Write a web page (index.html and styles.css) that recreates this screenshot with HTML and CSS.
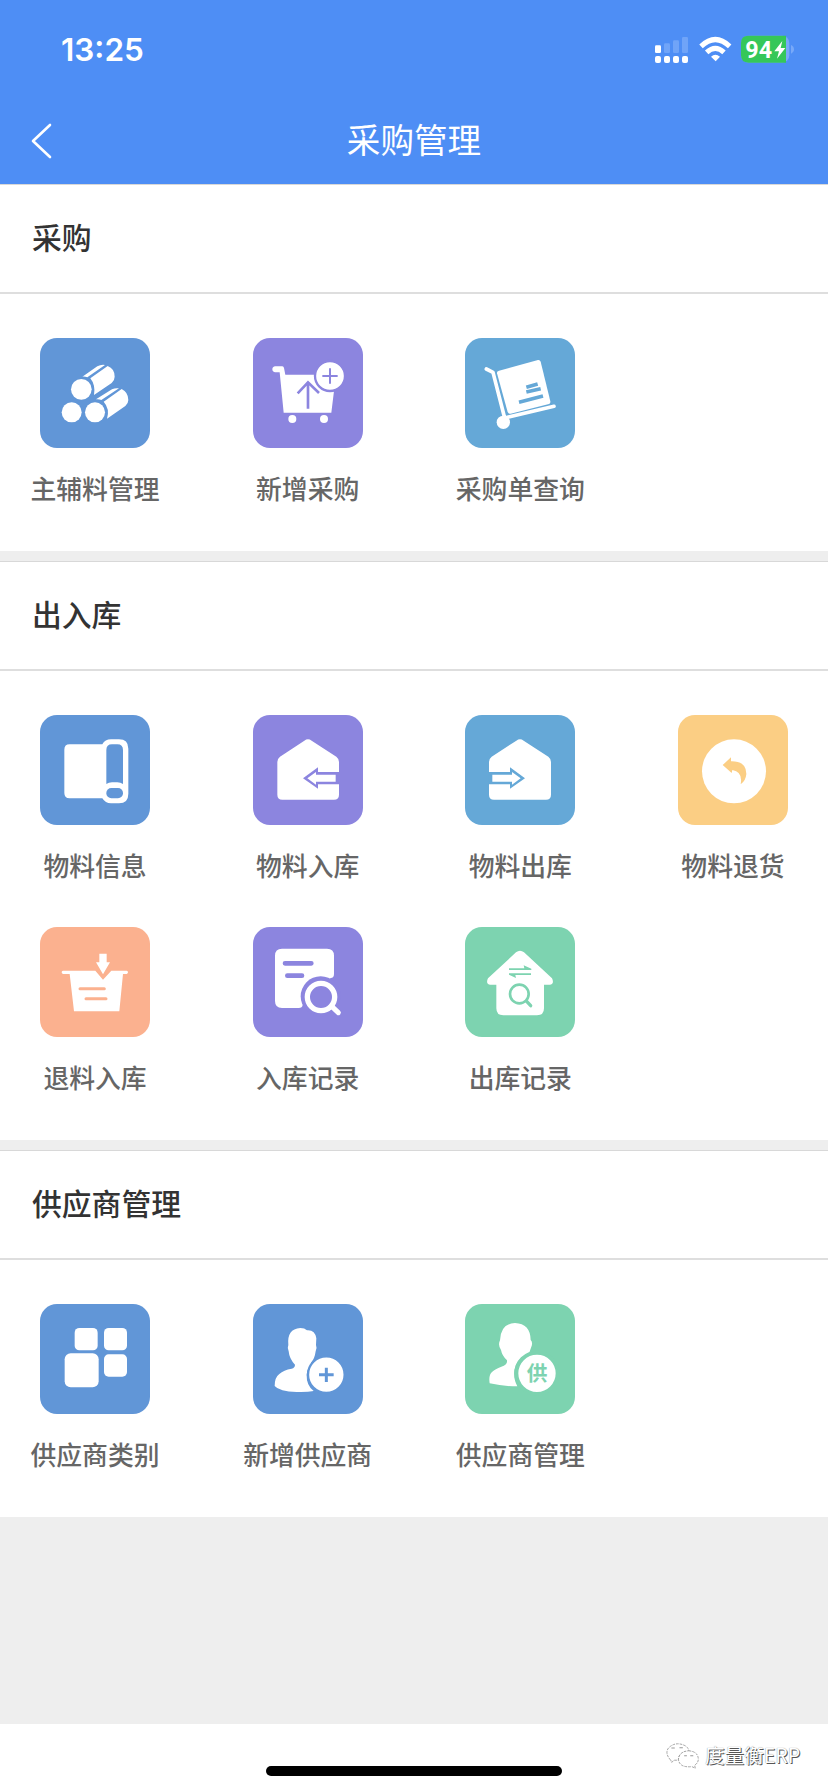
FILE: index.html
```
<!DOCTYPE html>
<html lang="zh-CN">
<head>
<meta charset="utf-8">
<title>采购管理</title>
<link rel="stylesheet" href="styles.css">
</head>
<body>
<div class="screen">
  <header class="header">
    <div class="status">
      <span class="time">13:25</span>
      <svg class="indicators" viewBox="0 0 564 180">
        <g fill="#fff">
          <rect x="45" y="76" width="18" height="23" rx="4"/>
          <rect x="45" y="108" width="18" height="21" rx="6"/>
          <rect x="72" y="108" width="18" height="21" rx="6"/>
          <rect x="99" y="108" width="18" height="21" rx="6"/>
          <rect x="126" y="108" width="18" height="21" rx="6"/>
        </g>
        <g fill="#70a4f8">
          <rect x="72" y="70" width="18" height="29" rx="4"/>
          <rect x="99" y="61" width="18" height="38" rx="4"/>
          <rect x="126" y="51" width="18" height="48" rx="4"/>
        </g>
        <g fill="none" stroke="#fff" stroke-width="15">
          <path d="M183 79Q226 38 269 79"/>
          <path d="M200 97Q226 73 252 97"/>
        </g>
        <path fill="#fff" d="M213 110Q226 98 240 110L227 124Z"/>
        <rect x="303" y="47" width="145" height="81" rx="22" fill="#78a9f9"/>
        <path fill="#35c759" d="M325 47H438V128H325Q303 128 303 106V69Q303 47 325 47Z"/>
        <path fill="#78a9f9" d="M453 75Q462 79 462 88T453 101Z"/>
        <text class="battery" x="316" y="113">94</text>
        <path fill="#fff" d="M427 63L403 94H417L411 116L436 84H422Z"/>
      </svg>
    </div>
    <div class="nav">
      <svg class="back" viewBox="0 0 22 36"><path d="M20 2L3 18L20 34"/></svg>
      <h1 class="nav-title">采购管理</h1>
    </div>
  </header>

  <main class="main">
    <section class="section">
      <h2 class="section-title">采购</h2>
      <div class="grid">
        <div class="item">
          <svg class="tile blue" viewBox="60 54 330 330">
            <g fill="#fff">
              <circle cx="155" cy="277" r="30"/><circle cx="225" cy="277" r="30"/><circle cx="184" cy="208" r="31"/>
              <path d="M187 170L232 139Q243 133 255 135L202 172Q194 169 187 170Z"/>
              <path d="M211 175L263 138Q284 146 284 170Q284 181 275 189L222 225Q227 195 211 175Z"/>
              <path d="M228 238L276 208Q286 203 297 205L244 240Q237 237 228 238Z"/>
              <path d="M251 245L305 207Q325 217 325 240Q325 250 316 258L261 296Q270 266 251 245Z"/>
            </g>
          </svg>
          <span class="label">主辅料管理</span>
        </div>
        <div class="item">
          <svg class="tile purple" viewBox="699 54 330 330">
            <path fill="#fff" d="M766 139H787Q791 139 792 144L796 164H884Q882 190 903 205Q920 217 942 213L934 278H791L779 157H766Q757 156 757 148T766 139Z"/>
            <circle class="disc" cx="930" cy="168" r="45" stroke-width="7"/>
            <circle cx="817" cy="297" r="12" fill="#fff"/><circle cx="912" cy="297" r="12" fill="#fff"/>
            <path class="cut" stroke-width="6" d="M930 145V191M907 168H953"/>
            <path class="cut" stroke-width="8" d="M864 266V188M833 220L864 187L897 219"/>
          </svg>
          <span class="label">新增采购</span>
        </div>
        <div class="item">
          <svg class="tile sky" viewBox="75 54 330 330">
            <path fill="#fff" d="M177 152L294 120Q300 119 302 125L331 244Q332 250 327 252L212 281Q205 282 203 276L171 160Q170 154 177 152Z"/>
            <path fill="none" stroke="#fff" stroke-width="11" stroke-linecap="round" stroke-linejoin="round" d="M139 147L159 157L194 294L342 259"/>
            <circle cx="190" cy="307" r="20" fill="#fff"/>
            <path class="cut" stroke-width="11" d="M259 202L293 192M259 216L302 206M237 247L309 228"/>
          </svg>
          <span class="label">采购单查询</span>
        </div>
      </div>
    </section>

    <section class="section">
      <h2 class="section-title">出入库</h2>
      <div class="grid">
        <div class="item">
          <svg class="tile blue" viewBox="60 44 330 330">
            <path fill="#fff" d="M149 132H247Q255 117 273 117H297Q325 117 325 145V280Q325 309 297 309H273Q256 309 247 294H149Q133 294 133 278V148Q133 132 149 132Z"/>
            <path class="hole" d="M276 132H292Q309 132 309 149V251Q302 246 292 246H276Q266 246 259 251V149Q259 132 276 132Z"/>
            <rect class="hole" x="259" y="263" width="50" height="31" rx="15"/>
          </svg>
          <span class="label">物料信息</span>
        </div>
        <div class="item">
          <svg class="tile purple" viewBox="699 44 330 330">
            <path fill="#fff" d="M853 121Q864 113 875 121L949 169Q957 175 957 185V283Q957 298 942 298H787Q772 298 772 283V185Q772 175 780 169Z"/>
            <path class="hole" d="M849 234L894 201V215H958V252H894V265Z"/>
            <path fill="#fff" d="M862 234L888 215V223H947V244H888V253Z"/>
          </svg>
          <span class="label">物料入库</span>
        </div>
        <div class="item">
          <svg class="tile sky" viewBox="75 44 330 330">
            <path fill="#fff" d="M229 121Q240 113 251 121L325 169Q333 175 333 185V283Q333 298 318 298H162Q147 298 147 283V185Q147 175 155 169Z"/>
            <path class="hole" d="M255 234L210 201V215H146V252H210V265Z"/>
            <path fill="#fff" d="M242 234L216 215V223H157V244H216V253Z"/>
          </svg>
          <span class="label">物料出库</span>
        </div>
        <div class="item">
          <svg class="tile yellow" viewBox="714 44 330 330">
            <circle cx="882" cy="213" r="96" fill="#fff"/>
            <path class="hole" d="M848 194L873 171V183Q920 182 919 222Q917 242 902 252Q909 214 877 209L875 218Z"/>
          </svg>
          <span class="label">物料退货</span>
        </div>
        <div class="item">
          <svg class="tile orange" viewBox="60 51 330 330">
            <path fill="#fff" d="M129 182H226L249 209L274 182H320Q324 183 324 187T320 192H309L298 304H162L149 192H129Q125 191 125 187T129 182Z"/>
            <path fill="#fff" d="M238 131H260V157H270L249 193L228 157H238Z"/>
            <path class="cut" stroke-linecap="round" stroke-width="9" d="M180 236H253M198 266H258"/>
          </svg>
          <span class="label">退料入库</span>
        </div>
        <div class="item">
          <svg class="tile purple" viewBox="699 51 330 330">
            <path fill="#fff" d="M786 116H921Q942 116 942 137V192Q942 204 932 204L848 285Q847 294 836 294H786Q765 294 765 273V137Q765 116 786 116Z"/>
            <circle class="hole" cx="902" cy="259" r="60"/>
            <path class="cut" stroke-linecap="round" stroke-width="14" d="M795 160H874M802 197H846"/>
            <circle cx="903" cy="261" r="41" fill="none" stroke="#fff" stroke-width="16"/>
            <path fill="none" stroke="#fff" stroke-width="15" stroke-linecap="round" d="M936 290L955 308"/>
          </svg>
          <span class="label">入库记录</span>
        </div>
        <div class="item">
          <svg class="tile green" viewBox="75 51 330 330">
            <path fill="#fff" d="M228 127Q240 117 252 127L336 205Q344 222 329 224H312V295Q312 316 291 316H190Q169 316 169 295V224H151Q136 222 144 205Z"/>
            <path class="hole" d="M207 175H253L251 166L274 176V180H207ZM207 190H273V195H226L228 204L207 194Z"/>
            <circle class="cut" cx="238" cy="252" r="28" stroke-width="8"/>
            <path class="cut" stroke-width="10" stroke-linecap="round" d="M260 274L272 287"/>
          </svg>
          <span class="label">出库记录</span>
        </div>
      </div>
    </section>

    <section class="section">
      <h2 class="section-title">供应商管理</h2>
      <div class="grid">
        <div class="item">
          <svg class="tile blue" viewBox="60 42 330 330">
            <g fill="#fff">
              <rect x="164" y="114" width="69" height="67" rx="14"/>
              <rect x="252" y="114" width="69" height="67" rx="14"/>
              <rect x="252" y="193" width="69" height="67" rx="14"/>
              <rect x="134" y="190" width="102" height="102" rx="18"/>
            </g>
          </svg>
          <span class="label">供应商类别</span>
        </div>
        <div class="item">
          <svg class="tile blue" viewBox="699 42 330 330">
            <path fill="#fff" d="M841 114Q854 114 861 121Q885 119 889 145L888 165Q892 175 887 184Q884 207 873 218V225Q860 239 860 255Q859 286 881 303Q862 307 830 306Q778 305 764 288Q764 262 778 252Q791 240 815 236Q825 233 825 224Q808 207 806 184Q801 175 805 165Q800 117 841 114Z"/>
            <circle class="disc" cx="919" cy="254" r="55" stroke-width="7"/>
            <path class="cut" stroke-width="9" d="M919 233V276M897 254H941"/>
          </svg>
          <span class="label">新增供应商</span>
        </div>
        <div class="item">
          <svg class="tile green" viewBox="75 42 330 330">
            <path fill="#fff" d="M225 99Q271 101 272 150Q280 158 273 173Q270 187 262 193Q229 208 223 241Q220 268 232 289Q187 289 149 280Q145 254 157 245Q165 237 184 230Q203 225 201 211Q186 197 183 180Q173 165 180 151Q182 101 225 99Z"/>
            <circle class="disc" cx="291" cy="250" r="62" stroke-width="12"/>
            <text class="badge-text" x="291" y="274" text-anchor="middle">供</text>
          </svg>
          <span class="label">供应商管理</span>
        </div>
      </div>
    </section>
  </main>

  <footer class="footer">
    <div class="home-bar"></div>
    <div class="watermark">
      <svg class="wechat" viewBox="108 124 104 86">
        <g fill="#fff" stroke="#888" stroke-width="2.2" stroke-dasharray="8 3">
          <path d="M125 181Q106 160 119 144Q140 124 168 138Q178 144 179 154Q146 158 148 181L134 181L128 188Z"/>
          <path d="M178 153Q207 155 207 179Q206 190 196 196L198 205L188 200Q151 204 148 179Q150 155 178 153Z"/>
        </g>
        <path stroke="#999" stroke-width="3" d="M127 145H137M151 144H161M165 168H173M183 168H192"/>
      </svg>
      <span class="watermark-text">度量衡ERP</span>
    </div>
  </footer>
</div>
</body>
</html>
```
FILE: styles.css
```
* { box-sizing: border-box; }

body {
  margin: 0;
  font-family: "Noto Sans CJK SC", sans-serif;
  background: #eee;
}

.screen {
  display: flex;
  flex-direction: column;
  width: 828px;
  height: 1792px;
  overflow: hidden;
}

.header { height: 184px; background: #4e8ef5; color: #fff; }

.status {
  display: flex;
  justify-content: space-between;
  align-items: center;
  height: 100px;
  padding-left: 61px;
}

.time { font: 600 31.5px/40px Inter, sans-serif; }
.indicators { width: 188px; height: 60px; }
.battery { font: 700 70px Roboto, sans-serif; fill: #fff; }

.nav {
  display: grid;
  grid-template-columns: 60px 1fr 60px;
  align-items: center;
  height: 82px;
}

.back { width: 22px; height: 36px; margin-left: 30px; }
.back path { fill: none; stroke: #fff; stroke-width: 2.6; stroke-linecap: round; stroke-linejoin: round; }

.nav-title { margin: 0; padding-bottom: 4px; font-size: 33.6px; line-height: 48px; font-weight: 400; text-align: center; }

.main { display: flex; flex-direction: column; gap: 10px; flex: 1; }

.section { background: #fff; border-top: 1px solid #d8d8d8; }

.section-title {
  height: 109px;
  margin: 0;
  padding-left: 32px;
  border-bottom: 2px solid #dedede;
  color: #333;
  font-size: 29.8px;
  font-weight: 500;
  line-height: 103px;
}

.grid {
  display: grid;
  grid-template-columns: repeat(4, 110px);
  grid-auto-rows: 212px;
  justify-content: space-between;
  padding: 44px 40px 1px;
}

.item { display: flex; flex-direction: column; align-items: center; }

.tile { display: block; width: 110px; height: 110px; border-radius: 17px; background: var(--tile); }
.blue { --tile: #6196d7; }
.purple { --tile: #8c85df; }
.sky { --tile: #65a8d7; }
.yellow { --tile: #fbce84; }
.orange { --tile: #fbb18f; }
.green { --tile: #7dd3b0; }

.cut { fill: none; stroke: var(--tile); }
.hole { fill: var(--tile); }
.disc { fill: #fff; stroke: var(--tile); }
.badge-text { font-size: 62px; font-weight: 700; fill: var(--tile); }

.label {
  margin-top: 20.5px;
  color: #666;
  font-size: 25.8px;
  font-weight: 500;
  line-height: 38px;
  white-space: nowrap;
}

.footer {
  display: grid;
  grid-template-columns: 1fr 296px 1fr;
  height: 68px;
  background: #fff;
}

.home-bar { grid-column: 2; height: 10px; margin-top: 42px; border-radius: 5px; background: #000; }

.watermark { display: flex; align-items: center; gap: 5px; height: 62px; margin-left: 103px; }
.wechat { width: 35px; height: 29px; }
.watermark-text {
  color: #fff;
  font-size: 19.6px;
  line-height: 28px;
  white-space: nowrap;
  text-shadow: 1px 1px 0 #555, 0 0 1px #777;
}
```
